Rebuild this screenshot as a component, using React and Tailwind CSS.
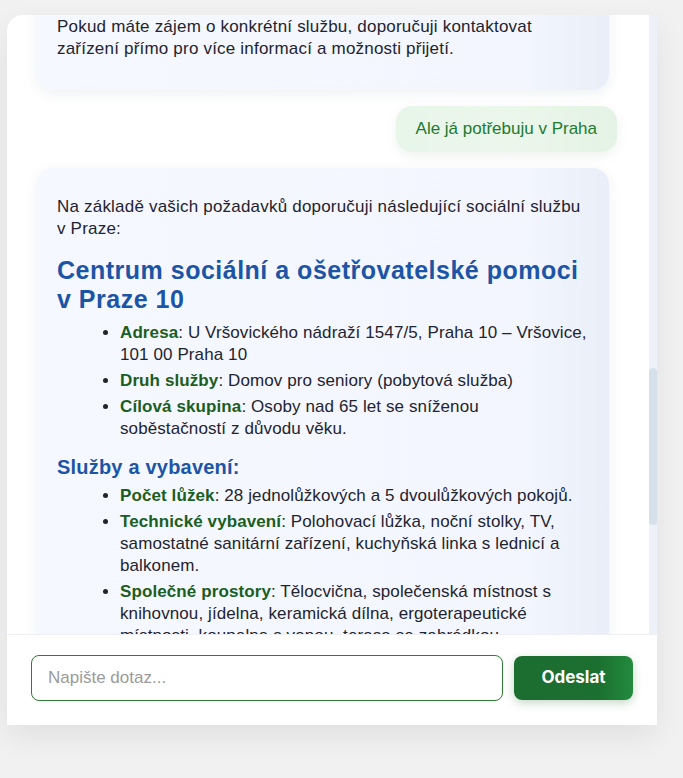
import { useState } from 'react';

const serviceInfo = [
  { label: 'Adresa', text: 'U Vršovického nádraží 1547/5, Praha 10 – Vršovice, 101 00 Praha 10' },
  { label: 'Druh služby', text: 'Domov pro seniory (pobytová služba)' },
  { label: 'Cílová skupina', text: 'Osoby nad 65 let se sníženou soběstačností z důvodu věku.' },
];

const equipment = [
  { label: 'Počet lůžek', text: '28 jednolůžkových a 5 dvoulůžkových pokojů.' },
  { label: 'Technické vybavení', text: 'Polohovací lůžka, noční stolky, TV, samostatné sanitární zařízení, kuchyňská linka s lednicí a balkonem.' },
  { label: 'Společné prostory', text: 'Tělocvična, společenská místnost s knihovnou, jídelna, keramická dílna, ergoterapeutické místnosti, koupelna s vanou, terasa se zahrádkou.' },
  { label: 'Kapacita', text: '38 klientů.' },
];

function BotBubble({ children, className = '' }) {
  return (
    <div
      className={`w-[572px] rounded-2xl bg-gradient-to-r from-[#f5f8ff] via-[#f3f6fe] via-85% to-[#e9eef8] px-5 pt-3 text-[17px] leading-[22px] tracking-[0.1px] text-[#1f2430] shadow-[0_4px_14px_rgba(30,50,90,0.07)] ${className}`}
    >
      {children}
    </div>
  );
}

function InfoList({ items }) {
  return (
    <ul className="list-disc pl-[63px] marker:text-[#1f2430]">
      {items.map((item, i) => (
        <li key={i} className="mb-1">
          <strong className="font-bold text-[#1b5e20]">{item.label}</strong>: {item.text}
        </li>
      ))}
    </ul>
  );
}

export default function App() {
  const [query, setQuery] = useState('');

  return (
    <div className="min-h-[778px] bg-[#f1f1f2] pt-[15px] pl-[7px] font-['Liberation_Sans',Arial,sans-serif]">
      <div className="flex w-[650px] flex-col overflow-hidden rounded-tl-2xl bg-white shadow-[0_12px_30px_rgba(0,0,0,0.07)]">
        <div className="flex h-[619px]">
          {/* messages */}
          <div className="flex flex-1 flex-col gap-4 overflow-hidden rounded-tr-2xl pl-[30px] pr-[32px]">
            <BotBubble className="-mt-[27px] shrink-0 pb-[14px]">
              <p className="my-4 tracking-[0.2px]">
                Pokud máte zájem o konkrétní službu, doporučuji kontaktovat zařízení přímo pro více informací a možnosti přijetí.
              </p>
            </BotBubble>

            <div className="flex shrink-0 justify-end">
              <div className="rounded-2xl bg-gradient-to-r from-[#e8f5e9] via-[#ebf7ea] to-[#e4f3e5] px-5 py-3 text-[17px] leading-[22px] text-[#217a2f] shadow-[0_4px_12px_rgba(40,100,50,0.08)]">
                Ale já potřebuju v Praha
              </div>
            </div>

            <BotBubble className="shrink-0 pb-3">
              <p className="mt-4 mb-4 tracking-[0.2px]">
                Na základě vašich požadavků doporučuji následující sociální službu v Praze:
              </p>
              <h2 className="mb-2 text-[25px] font-bold leading-[29px] tracking-[0.5px] text-[#1c55a6]">
                Centrum sociální a ošetřovatelské pomoci v Praze 10
              </h2>
              <InfoList items={serviceInfo} />
              <h3 className="mt-4 mb-[7px] text-[20px] font-bold leading-[22px] tracking-[0.2px] text-[#1c55a6]">
                Služby a vybavení:
              </h3>
              <InfoList items={equipment} />
            </BotBubble>
          </div>

          {/* scrollbar */}
          <div className="w-2 bg-[#eef2f8]">
            <div className="mt-[353px] h-[157px] rounded-full bg-[#d6e0ea]" />
          </div>
        </div>

        {/* input */}
        <div className="flex items-center gap-[11px] border-t border-[#eef0f6] px-6 pt-5 pb-6">
          <input
            value={query}
            onChange={(e) => setQuery(e.target.value)}
            placeholder="Napište dotaz..."
            className="h-[46px] flex-1 rounded-lg border border-[#2e7d32] px-4 text-[17px] text-[#222] outline-none placeholder:text-[#9b9b9b]"
          />
          <button className="h-[44px] w-[119px] rounded-lg bg-gradient-to-r from-[#1b6e2f] via-[#1b6f2f] via-70% to-[#238b3e] font-['Inter',sans-serif] text-[17px] font-bold text-white shadow-[0_3px_10px_rgba(27,94,32,0.25)]">
            Odeslat
          </button>
        </div>
      </div>
    </div>
  );
}
